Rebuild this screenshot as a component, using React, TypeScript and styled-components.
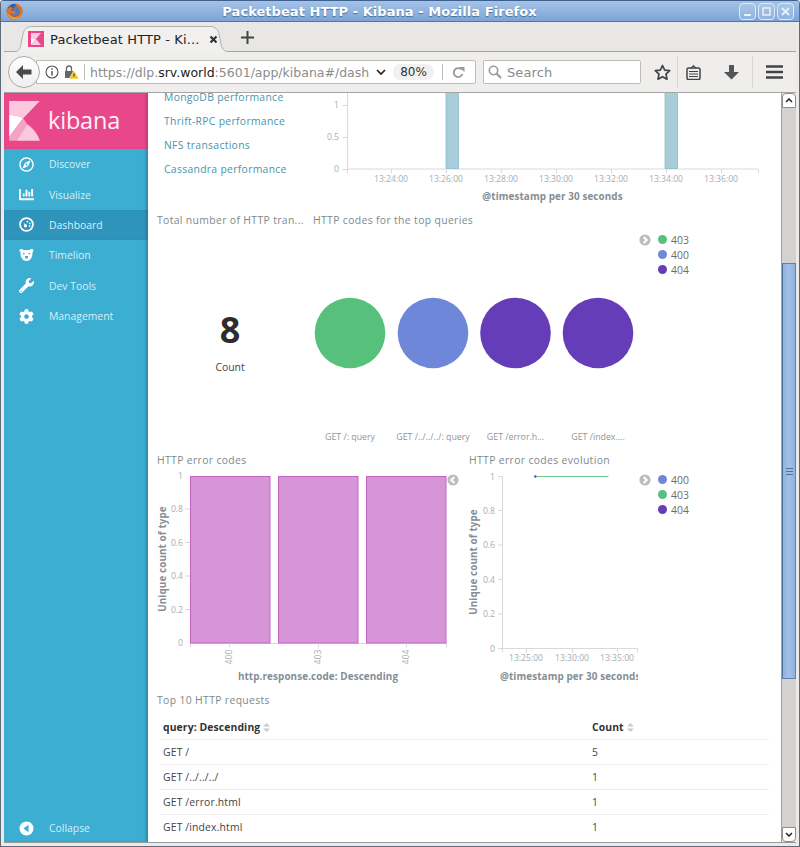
import React from "react";
import styled, { createGlobalStyle } from "styled-components";
import { FaRegCompass, FaChartBar, FaWrench, FaCog } from "react-icons/fa";

const Global = createGlobalStyle`
  html, body { margin: 0; padding: 0; background: #ecebea; }
  #root { width: 800px; height: 847px; overflow: hidden; }
`;

const Frame = styled.div`
  width: 800px; height: 847px; box-sizing: border-box; overflow: hidden;
  display: flex; flex-direction: column;
  background: #ecebea; border: 1px solid #5f6a78; border-top-color: #3f5f8f; border-radius: 4px 4px 0 0;
  font-family: "DejaVu Sans", sans-serif;
`;
const TitleBar = styled.div`
  height: 21px; flex: none; position: relative; display: flex; align-items: center; justify-content: center;
  background: linear-gradient(#a5c3e6, #7ca4d8); border-bottom: 1px solid #4d78ae; box-sizing: border-box; padding-right: 41px;
`;
const TitleText = styled.div`
  font: bold 13px "DejaVu Sans", sans-serif; color: #fff; letter-spacing: .05px; text-shadow: 0 1px 1px #4a6a96;
`;
const FoxSlot = styled.div`position: absolute; left: 5px; top: 2px; width: 17px; height: 17px;`;
const WinButtons = styled.div`position: absolute; right: 5px; top: 2px; display: flex; gap: 2px;`;
const WinButton = styled.div`
  width: 17px; height: 17px; box-sizing: border-box; border: 1px solid #dfe9f5; border-radius: 4px;
  background: rgba(255,255,255,.12); display: flex; align-items: center; justify-content: center;
`;
const TabBar = styled.div`
  height: 30px; flex: none; position: relative; display: flex; align-items: flex-end;
  margin: 0 3px; background: #e8e7e6;
  border-bottom: 1px solid #a5a5a3; box-sizing: border-box;
`;
const Tab = styled.div`
  position: relative; margin-left: 24px; width: 186px; height: 26px; margin-bottom: -1px;
  display: flex; align-items: center; gap: 6px; font-size: 13px; color: #222;
`;
const TabShape = styled.svg`position: absolute; left: -18px; top: 0; width: 224px; height: 27px;`;
const TabLabel = styled.span`position: relative; white-space: nowrap; width: 150px; letter-spacing: .12px;`;
const Favicon = styled.svg`position: relative; flex: none;`;
const TabClose = styled.svg`position: relative; flex: none; margin-left: 3px;`;
const NewTab = styled.svg`margin: 0 0 7px 27px;`;
const NavBar = styled.div`
  height: 41px; flex: none; margin: 0 3px; display: flex; align-items: center; position: relative;
  background: #efeeed; border-bottom: 1px solid #a5a5a3; box-sizing: border-box; padding-left: 4px;
`;
const BackButton = styled.div`
  width: 32px; height: 32px; box-sizing: border-box; flex: none; border-radius: 50%; background: linear-gradient(#fff,#efefef); border: 1px solid #a9a9a9;
  display: flex; align-items: center; justify-content: center; z-index: 1;
`;
const UrlBar = styled.div`
  width: 440px; height: 24px; box-sizing: border-box; margin-left: -4px; flex: none; background: #fff; border: 1px solid #bdbdbb; border-radius: 0 2px 2px 0;
  display: flex; align-items: center; padding-left: 8px;
`;
const UrlIcons = styled.div`display: flex; align-items: center; gap: 4px; flex: none;`;
const Sep = styled.div`width: 1px; height: 16px; background: #bdbdbb; flex: none; margin: ${p => p.$m ?? "0 5px"};`;
const UrlText = styled.div`
  width: 280px; overflow: hidden; white-space: nowrap; font-size: 12.5px; color: #8c8c8c; flex: none;
  b { font-weight: 400; color: #222; }
`;
const UrlChevron = styled.svg`margin-left: 6px; flex: none;`;
const ReloadIcon = styled.svg`margin-left: 9px; flex: none;`;
const ZoomPill = styled.div`
  width: 41px; height: 16px; line-height: 16px; border-radius: 8px; background: #f1f1f1; text-align: center; font-size: 12px; color: #333; flex: none; margin-left: 7px;
`;
const SearchBox = styled.div`
  width: 158px; height: 24px; box-sizing: border-box; flex: none; margin-left: 7px; background: #fff; border: 1px solid #bdbdbb; border-radius: 2px;
  display: flex; align-items: center; gap: 5px; padding-left: 4px; font-size: 13px; color: #8a8a8a; letter-spacing: .1px;
`;
const ToolIcons = styled.div`display: flex; align-items: center; flex: 1; height: 100%;`;
const ToolSlot = styled.div`
  width: ${p => p.$w}px; flex: none; display: flex; justify-content: center; align-items: center; height: 32px;
  padding-left: ${p => p.$pl ?? 0}px; box-sizing: border-box;
  border-right: ${p => p.$sep ? "1px solid #d6d5d4" : "none"};
`;

const Body = styled.div`
  flex: 1; min-height: 0; display: flex; margin: 0 3px 3px; border-bottom: 1px solid #9a9a98;
`;
const Sidebar = styled.nav`
  width: 144px; flex: none; display: flex; flex-direction: column; background: #3caed2;
  box-shadow: inset -3px 0 3px -1px rgba(0,0,0,.22); font-family: "Open Sans", sans-serif;
`;
const Brand = styled.div`
  height: 56px; flex: none; background: #e8488a; display: flex; align-items: center; gap: 8px; padding-left: 5px;
  box-shadow: inset -3px 0 3px -1px rgba(0,0,0,.18);
`;
const BrandName = styled.div`font: 400 23.5px/1 "Open Sans", sans-serif; color: #fff; opacity: .93; margin-top: -1px; letter-spacing: -.2px;`;
const NavItem = styled.div`
  height: 30.4px; flex: none; display: flex; align-items: center; color: #d7eff7; font-size: 10.4px;
  background: ${p => p.$active ? "#2e94bc" : "transparent"};
  box-shadow: ${p => p.$active ? "inset -3px 0 3px -1px rgba(0,0,0,.18)" : "none"};
`;
const NavIcon = styled.div`width: 45px; flex: none; display: flex; justify-content: center; color: #fff; font-size: 15px; line-height: 0;`;
const Spacer = styled.div`flex: 1;`;
const CollapseItem = styled(NavItem)`height: 28px;`;

const Main = styled.main`
  width: 633px; flex: none; background: #fff; overflow: hidden; display: flex; flex-direction: column;
  font-family: "Open Sans", sans-serif; color: #6f7f80; font-size: 10.4px;
`;
const TopRow = styled.section`height: 117px; flex: none; display: flex; overflow: hidden;`;
const LinkList = styled.div`
  width: 172px; flex: none; margin-top: -8px; padding-left: 16px; box-sizing: border-box; display: flex; flex-direction: column;
  line-height: 24px; color: #4a94ad; letter-spacing: .3px;
`;
const MidRow = styled.section`height: 240px; flex: none; display: flex;`;
const ChartRow = styled.section`height: 240px; flex: none; display: flex;`;
const Panel = styled.div`display: flex; flex-direction: column; width: ${p => p.$w}px; flex: none; position: relative;`;
const PanelTitle = styled.div`
  height: 20px; line-height: 20px; padding-left: ${p => p.$pl ?? 9}px; color: #7a8b8c; letter-spacing: .35px; white-space: nowrap; flex: none;
`;
const MetricBody = styled.div`flex: 1; display: flex; flex-direction: column; align-items: center; justify-content: center; padding: 5px 0 0 4px;`;
const MetricValue = styled.div`font: 700 36px/40px "Open Sans", sans-serif; color: #2d2d2d;`;
const MetricLabel = styled.div`margin-top: 9px; color: #444; font-size: 10.4px; line-height: 16px;`;
const PanelBody = styled.div`display: flex; flex: 1; min-height: 0;`;
const Chart = styled.svg`
  display: block; flex: none;
  text { font-family: "Open Sans", sans-serif; }
  .tick { font-size: 8.6px; fill: #a6aeb3; }
  .axis { font-size: 9.9px; font-weight: 700; fill: #848e96; letter-spacing: .1px; }
  .pie { font-size: 8.8px; fill: #8e9699; }
`;
const Legend = styled.div`
  display: flex; flex-direction: column; padding: 2px 0 0 6px; position: relative; margin-left: ${p => p.$ml ?? 0}px;
`;
const LegendItem = styled.div`
  height: 15px; display: flex; align-items: center; gap: 4px; padding-left: 12px; color: #6d6d6d; font-size: 10.4px;
`;
const LegendDot = styled.span`width: 9px; height: 9px; border-radius: 50%; background: ${p => p.$c};`;
const LegendToggle = styled.svg`position: absolute; left: -1px; top: 4px;`;
const CollapseToggle = styled.svg`position: absolute; left: 299px; top: 24px;`;

const TableSection = styled.section`flex: 1; display: flex; flex-direction: column; min-height: 0;`;
const Table = styled.table`
  margin: 5px 0 0 12px; width: 609px; border-collapse: collapse; table-layout: fixed; color: #444; font-size: 10.4px;
  th { text-align: left; color: #333; font-weight: 700; height: 24px; padding: 1px 3px 0; border-bottom: 1px solid #ececec; letter-spacing: .1px; box-sizing: border-box; }
  td { height: 25px; padding: 0 3px; border-bottom: 1px solid #ececec; box-sizing: border-box; letter-spacing: .15px; }
  tr:last-child td { border-bottom: none; }
`;
const QueryCol = styled.col`width: 429px;`;
const SortIcon = styled.svg`margin-left: 3px; vertical-align: -1px;`;

const Scrollbar = styled.div`
  width: 15px; flex: none; box-sizing: border-box; border-left: 1px solid #9f9f9d; display: flex; flex-direction: column;
  background: #ecebea;
`;
const ScrollButton = styled.div`
  height: 15px; flex: none; box-sizing: border-box; background: #fff; border: 1px solid #8c8c8a; border-radius: ${p => p.$up ? "4px 4px 0 0" : "0 0 4px 4px"};
  display: flex; align-items: center; justify-content: center;
`;
const Track = styled.div`flex: 1; background: #d3d2cf; display: flex; flex-direction: column; padding-top: 155px;`;
const Thumb = styled.div`
  height: 416px; flex: none; box-sizing: border-box; border: 1px solid #5d82b2; border-left-color: #4f74a5;
  background: linear-gradient(90deg, #8fb2e0, #a3c0e7 50%, #8fb2e0); display: flex; align-items: center; justify-content: center;
`;

const Fox = () => (
  <svg width="17" height="17" viewBox="0 0 17 17">
    <circle cx="8.5" cy="8.5" r="7.8" fill="#3a5a98" />
    <path d="M8.5 3.2c2.8 0 5 2.2 5 5s-2.3 5.2-5 5.2-4.7-1.8-5-4.4C4.8 10.8 8 11 9.6 9.4 8.6 8.2 7 8.2 6.4 7.6 6.9 5.8 7.4 5 8.5 3.2z" fill="#5d79b8" />
    <path d="M8.6.6c4.6 0 8.2 3.6 8 8.2-.2 4.4-3.8 7.7-8.2 7.6C4.2 16.3 1 13.3.6 9.3.4 7.6.8 5.2 2 3.6c0 1 .3 1.6.8 2 .5-1.2 1.4-2 2.4-2.4C5 4.4 6 5.2 7.2 5.6c-1 .5-1.6 1-1.8 1.8 1.4.3 3.8.6 4.8 2.2-1.4 1.8-4.4 1.6-6.4.2.6 2.4 2.6 4 5 3.9 2.8-.1 4.8-2.2 4.8-5 0-2.2-1.2-4.4-3.4-5.4C10.2 2.6 9.3 1.6 8.6.6z" fill="#e8701e" />
    <path d="M1 9.5c.8 3.8 3.8 6.6 7.6 6.6 3.6 0 6.6-2.4 7.6-5.6-1.6 2.6-4.4 4.2-7.4 4-3.4-.2-6.2-2-7.8-5z" fill="#f3a51f" />
  </svg>
);

const KFavicon = () => (
  <Favicon width="16" height="16" viewBox="0 0 16 16">
    <rect width="16" height="16" fill="#e8488a" />
    <path d="M3 2h10L8 8 3 7z" fill="#fbc9de" />
    <path d="M3 7l5 1-5 6z" fill="#fff" />
    <path d="M8 8l5 6H3z" fill="#fbc9de" />
  </Favicon>
);

const Logo = () => (
  <svg width="31" height="40" viewBox="0 0 92 120">
    <path d="M0 0H92L42 52C30 45 14 42 0 42Z" fill="#fbc8dd" />
    <path d="M0 42C14 42 30 45 42 52L0 108Z" fill="#fff" />
    <path d="M42 52 0 108V119H22L54 70C50 63 46 57 42 52Z" fill="#f5a3c5" />
    <path d="M54 70 22 119H92C86 100 72 82 54 70Z" fill="#fbc8dd" />
  </svg>
);

const DashIcon = () => (
  <svg width="15" height="15" viewBox="0 0 15 15">
    <circle cx="7.5" cy="7.5" r="6.4" fill="none" stroke="#fff" strokeWidth="1.8" />
    <circle cx="6.4" cy="8.8" r="1.6" fill="#fff" />
    <path d="M6.2 8.8 4.4 5.6 7.4 8z" fill="#fff" />
    <circle cx="8.4" cy="4.7" r=".9" fill="#fff" /><circle cx="10.7" cy="6.4" r=".9" fill="#fff" /><circle cx="10.6" cy="9.1" r=".9" fill="#fff" />
  </svg>
);

const BearIcon = () => (
  <svg width="15" height="12" viewBox="0 0 15 12">
    <path d="M.5 1.500C.5.500 1.500 0 2.500 0c.9 0 1.500.5 1.900 1h6.200c.4-.5 1-1 1.900-1 1 0 2 .5 2 1.500 0 .8-.4 1.400-1 1.700.2 4-1.500 8.800-6 8.800s-6.200-4.800-6-8.800c-.6-.3-1-.9-1-1.700z" fill="#fff" />
    <circle cx="4.800" cy="4.600" r=".9" fill="#3caed2" /><circle cx="10.200" cy="4.600" r=".9" fill="#3caed2" />
    <path d="M5.800 7h3.400L8.600 9.500H6.400z" fill="#3caed2" />
  </svg>
);

const Toggle = ({ left }: { left?: boolean }) => (
  <>
    <circle cx="6" cy="6" r="5.6" fill="#bdbdbd" />
    <path d={left ? "M7.300 3 4.300 6l3 3" : "M4.700 3l3 3-3 3"} fill="none" stroke="#fff" strokeWidth="2" />
  </>
);

const Bars = [446, 665];
const topTicks: [number, string][] = [[391, "13:24:00"], [446, "13:26:00"], [501, "13:28:00"], [556, "13:30:00"], [611, "13:32:00"], [666, "13:34:00"], [721, "13:36:00"]];

const TopChart = () => (
  <Chart width="461" height="117" viewBox="320 93 461 117">
    <path d="M347.500 93V169M758 169H347.500M347.500 169v4M758.500 169v4" stroke="#d9d9d9" fill="none" />
    {Bars.map(x => <g key={x}><rect x={x} y="90" width="12.500" height="78.500" fill="#a6cdd9" stroke="#8dbccc" strokeWidth=".8" /></g>)}
    {[[105, "1"], [137, "0.5"], [169, "0"]].map(([y, l]) => (
      <g key={l as string}>
        <text className="tick" x="339" y={(y as number) + 3} textAnchor="end">{l}</text>
        <path d={`M342.500 ${y}.5h5`} stroke="#d9d9d9" />
      </g>
    ))}
    {topTicks.map(([x, l]) => (
      <g key={l}>
        <path d={`M${x}.5 169v4`} stroke="#d9d9d9" />
        <text className="tick" x={x} y="181.500" textAnchor="middle">{l}</text>
      </g>
    ))}
    <text className="axis" x="552.500" y="200" textAnchor="middle">@timestamp per 30 seconds</text>
  </Chart>
);

const pies: [number, string, string][] = [
  [350, "#57c17b", "GET /: query"],
  [433, "#6f87d8", "GET /../../../: query"],
  [515.500, "#663db8", "GET /error.h..."],
  [598, "#663db8", "GET /index...."],
];

const PieChart = () => (
  <Chart width="332" height="220" viewBox="308 230 332 220">
    {pies.map(([x, c, l]) => (
      <g key={l}>
        <circle cx={x} cy="333" r="35.300" fill={c} />
        <text className="pie" x={x} y="440" textAnchor="middle">{l}</text>
      </g>
    ))}
  </Chart>
);

const barXs = [190, 278, 366];
const BarChart = () => (
  <Chart width="300" height="220" viewBox="148 470 300 220">
    <path d="M190 643.500H446.500M190.500 643.500v4M446.500 643.500v4" stroke="#d9d9d9" fill="none" />
    {barXs.map(x => <rect key={x} x={x + .5} y="476.500" width="79.500" height="166.500" fill="#d695d6" stroke="#c464c4" />)}
    {[[476, "1"], [509, "0.8"], [542.500, "0.6"], [576, "0.4"], [609.500, "0.2"], [643, "0"]].map(([y, l]) => (
      <g key={l as string}>
        <text className="tick" x="183" y={(y as number) + 3} textAnchor="end">{l}</text>
        {l !== "1" && l !== "0" && <path d={`M185 ${y}h5`} stroke="#d9d9d9" />}
      </g>
    ))}
    {[[229, "400"], [318, "403"], [406, "404"]].map(([x, l]) => (
      <g key={l as string}>
        <path d={`M${x}.5 643.500v4`} stroke="#d9d9d9" />
        <text className="tick" transform={`translate(${(x as number) + 3} 657) rotate(-90)`} textAnchor="middle">{l}</text>
      </g>
    ))}
    <text className="axis" x="318" y="680" textAnchor="middle">http.response.code: Descending</text>
    <text className="axis" transform="translate(165.500 559) rotate(-90)" textAnchor="middle">Unique count of type</text>
  </Chart>
);

const LineChart = () => (
  <Chart width="175" height="220" viewBox="463 470 175 220">
    <path d="M502.500 476V648.500H638M502.500 648.500v4M637.500 648.500v4" stroke="#d9d9d9" fill="none" />
    {[[476.500, "1"], [510.500, "0.8"], [545, "0.6"], [579.500, "0.4"], [614, "0.2"], [648.500, "0"]].map(([y, l]) => (
      <g key={l as string}>
        <text className="tick" x="495" y={(y as number) + 3} textAnchor="end">{l}</text>
        <path d={`M498 ${y}h5`} stroke="#d9d9d9" />
      </g>
    ))}
    {[[526, "13:25:00"], [572, "13:30:00"], [617, "13:35:00"]].map(([x, l]) => (
      <g key={l as string}>
        <path d={`M${x}.5 648.500v4`} stroke="#d9d9d9" />
        <text className="tick" x={x} y="661" textAnchor="middle">{l}</text>
      </g>
    ))}
    <path d="M535 476.500H608.500" stroke="#66c98a" strokeWidth="1" />
    <circle cx="535.300" cy="476.500" r="1.200" fill="#663db8" />
    <text className="axis" x="500" y="680">@timestamp per 30 seconds</text>
    <text className="axis" transform="translate(476.500 562) rotate(-90)" textAnchor="middle">Unique count of type</text>
  </Chart>
);

const Sort = () => (
  <SortIcon width="7" height="9" viewBox="0 0 7 9">
    <path d="M3.500 0 7 3.600H0z" fill="#c6ccd0" /><path d="M3.500 9 7 5.400H0z" fill="#c6ccd0" />
  </SortIcon>
);

const navItems: [React.ReactNode, string][] = [
  [<FaRegCompass key="a" />, "Discover"],
  [<FaChartBar key="b" />, "Visualize"],
  [<DashIcon key="c" />, "Dashboard"],
  [<BearIcon key="d" />, "Timelion"],
  [<FaWrench key="e" />, "Dev Tools"],
  [<FaCog key="f" />, "Management"],
];

const rows: [string, number][] = [["GET /", 5], ["GET /../../../", 1], ["GET /error.html", 1], ["GET /index.html", 1]];

export default function App() {
  return (
    <>
      <Global />
      <Frame>
        <TitleBar>
          <FoxSlot><Fox /></FoxSlot>
          <TitleText>Packetbeat HTTP - Kibana - Mozilla Firefox</TitleText>
          <WinButtons>
            <WinButton><svg width="11" height="11" viewBox="0 0 11 11"><path d="M2 9h7" stroke="#e8f0fa" strokeWidth="2" /></svg></WinButton>
            <WinButton><svg width="11" height="11" viewBox="0 0 11 11"><rect x="2" y="2" width="7" height="7" fill="none" stroke="#e8f0fa" strokeWidth="1.500" /></svg></WinButton>
            <WinButton><svg width="11" height="11" viewBox="0 0 11 11"><path d="M2 2l7 7M9 2l-7 7" stroke="#e8f0fa" strokeWidth="2" /></svg></WinButton>
          </WinButtons>
        </TitleBar>
        <TabBar>
          <Tab>
            <TabShape viewBox="0 0 224 27">
              <path d="M0 26.500C8 26.500 10 24 11 18L13 8C14 3 17 .5 22 .5H200C205 .5 208 3 209 8L211 18C212 24 215 26.500 224 26.500Z" fill="#f1f0ef" stroke="#b0b0ae" />
            </TabShape>
            <KFavicon />
            <TabLabel>Packetbeat HTTP - Ki...</TabLabel>
            <TabClose width="9" height="9" viewBox="0 0 9 9"><path d="M1.500 1.500l6 6M7.500 1.500l-6 6" stroke="#333" strokeWidth="2.200" /></TabClose>
          </Tab>
          <NewTab width="13" height="13" viewBox="0 0 13 13"><path d="M6.500 0v13M0 6.500h13" stroke="#444" strokeWidth="2" /></NewTab>
        </TabBar>
        <NavBar>
          <BackButton>
            <svg width="16" height="14" viewBox="0 0 16 14"><path d="M7 0 0 7l7 7V9.500h8.500v-5H7z" fill="#4a4a4a" /></svg>
          </BackButton>
          <UrlBar>
            <UrlIcons>
              <svg width="14" height="14" viewBox="0 0 14 14"><circle cx="7" cy="7" r="6" fill="none" stroke="#555" strokeWidth="1.100" /><path d="M7 6v4.500M7 3.200v1.500" stroke="#555" strokeWidth="1.500" /></svg>
              <svg width="16" height="16" viewBox="0 0 16 16">
                <path d="M2 7h8v7H2z" fill="#666" /><path d="M3.500 7V4.500a2.500 2.500 0 0 1 5 0V7" fill="none" stroke="#666" strokeWidth="1.300" />
                <path d="M11 6.500 16 15H6z" fill="#f5c518" stroke="#fff" strokeWidth=".6" /><path d="M11 9.500v3" stroke="#333" strokeWidth="1" />
              </svg>
            </UrlIcons>
            <Sep $m="0 5px" />
            <UrlText>https://dlp.<b>srv.world</b>:5601/app/kibana#/dashboard</UrlText>
            <UrlChevron width="10" height="7" viewBox="0 0 10 7"><path d="M1 1l4 4 4-4" fill="none" stroke="#222" strokeWidth="1.700" /></UrlChevron>
            <ZoomPill>80%</ZoomPill>
            <Sep $m="0 0 0 8px" />
            <ReloadIcon width="13" height="13" viewBox="0 0 13 13"><path d="M10.500 8a4.500 4.500 0 1 1-1-4.500" fill="none" stroke="#999" strokeWidth="1.800" /><path d="M7 1h5.500v5z" fill="#999" /></ReloadIcon>
          </UrlBar>
          <SearchBox>
            <svg width="14" height="14" viewBox="0 0 14 14"><circle cx="5.500" cy="5.500" r="4.200" fill="none" stroke="#999" strokeWidth="1.600" /><path d="M8.500 8.500l4.500 4.500" stroke="#999" strokeWidth="2" /></svg>
            Search
          </SearchBox>
          <ToolIcons>
            <ToolSlot $w={37} $sep $pl={7}>
              <svg width="17" height="17" viewBox="0 0 17 17"><path d="M8.500 1.500l2.200 4.600 5 .6-3.700 3.500 1 5-4.500-2.500L4 15.200l1-5L1.300 6.700l5-.6z" fill="none" stroke="#444" strokeWidth="1.700" strokeLinejoin="round" /></svg>
            </ToolSlot>
            <ToolSlot $w={31}>
              <svg width="15" height="15" viewBox="0 0 15 15"><rect x="1" y="3" width="13" height="11.500" rx="1.500" fill="none" stroke="#444" strokeWidth="1.500" /><path d="M5 3.200 7.500.8 10 3.200M3 6.500h9M3 9h9M3 11.500h9" fill="none" stroke="#444" strokeWidth="1.200" /></svg>
            </ToolSlot>
            <ToolSlot $w={44} $sep $pl={2}>
              <svg width="15" height="15" viewBox="0 0 15 15"><path d="M5 0h5v7h5l-7.500 7.500L0 7h5z" fill="#555" /></svg>
            </ToolSlot>
            <ToolSlot $w={42}>
              <svg width="17" height="14" viewBox="0 0 17 14"><path d="M0 1.500h17M0 7h17M0 12.500h17" stroke="#444" strokeWidth="2.400" /></svg>
            </ToolSlot>
          </ToolIcons>
        </NavBar>
        <Body>
          <Sidebar>
            <Brand><Logo /><BrandName>kibana</BrandName></Brand>
            {navItems.map(([icon, label]) => (
              <NavItem key={label} $active={label === "Dashboard"}>
                <NavIcon>{icon}</NavIcon>{label}
              </NavItem>
            ))}
            <Spacer />
            <CollapseItem>
              <NavIcon>
                <svg width="15" height="15" viewBox="0 0 15 15"><circle cx="7.500" cy="7.500" r="7" fill="#fff" /><path d="M9.500 3.800v7.400L4.500 7.500z" fill="#3caed2" /></svg>
              </NavIcon>
              Collapse
            </CollapseItem>
          </Sidebar>
          <Main>
            <TopRow>
              <LinkList>
                <span>MongoDB performance</span>
                <span>Thrift-RPC performance</span>
                <span>NFS transactions</span>
                <span>Cassandra performance</span>
              </LinkList>
              <TopChart />
            </TopRow>
            <MidRow>
              <Panel $w={160}>
                <PanelTitle>Total number of HTTP tran...</PanelTitle>
                <MetricBody>
                  <MetricValue>8</MetricValue>
                  <MetricLabel>Count</MetricLabel>
                </MetricBody>
              </Panel>
              <Panel $w={473}>
                <PanelTitle $pl={5}>HTTP codes for the top queries</PanelTitle>
                <PanelBody>
                  <PieChart />
                  <Legend>
                    <LegendToggle width="12" height="12" viewBox="0 0 12 12"><Toggle /></LegendToggle>
                    <LegendItem><LegendDot $c="#57c17b" />403</LegendItem>
                    <LegendItem><LegendDot $c="#6f87d8" />400</LegendItem>
                    <LegendItem><LegendDot $c="#663db8" />404</LegendItem>
                  </Legend>
                </PanelBody>
              </Panel>
            </MidRow>
            <ChartRow>
              <Panel $w={315}>
                <PanelTitle>HTTP error codes</PanelTitle>
                <PanelBody><BarChart /></PanelBody>
                <CollapseToggle width="12" height="12" viewBox="0 0 12 12"><Toggle left /></CollapseToggle>
              </Panel>
              <Panel $w={318}>
                <PanelTitle $pl={6}>HTTP error codes evolution</PanelTitle>
                <PanelBody>
                  <LineChart />
                  <Legend $ml={2}>
                    <LegendToggle width="12" height="12" viewBox="0 0 12 12"><Toggle /></LegendToggle>
                    <LegendItem><LegendDot $c="#6f87d8" />400</LegendItem>
                    <LegendItem><LegendDot $c="#57c17b" />403</LegendItem>
                    <LegendItem><LegendDot $c="#663db8" />404</LegendItem>
                  </Legend>
                </PanelBody>
              </Panel>
            </ChartRow>
            <TableSection>
              <PanelTitle>Top 10 HTTP requests</PanelTitle>
              <Table>
                <colgroup><QueryCol /><col /></colgroup>
                <thead>
                  <tr><th>query: Descending<Sort /></th><th>Count<Sort /></th></tr>
                </thead>
                <tbody>
                  {rows.map(([q, c]) => <tr key={q}><td>{q}</td><td>{c}</td></tr>)}
                </tbody>
              </Table>
            </TableSection>
          </Main>
          <Scrollbar>
            <ScrollButton $up><svg width="8" height="5" viewBox="0 0 8 5"><path d="M1 4l3-3 3 3" fill="none" stroke="#222" strokeWidth="1.500" /></svg></ScrollButton>
            <Track>
              <Thumb><svg width="7" height="7" viewBox="0 0 7 7"><path d="M0 .5h7M0 3.500h7M0 6.500h7" stroke="#4f6f98" /></svg></Thumb>
            </Track>
            <ScrollButton><svg width="8" height="5" viewBox="0 0 8 5"><path d="M1 1l3 3 3-3" fill="none" stroke="#222" strokeWidth="1.500" /></svg></ScrollButton>
          </Scrollbar>
        </Body>
      </Frame>
    </>
  );
}
